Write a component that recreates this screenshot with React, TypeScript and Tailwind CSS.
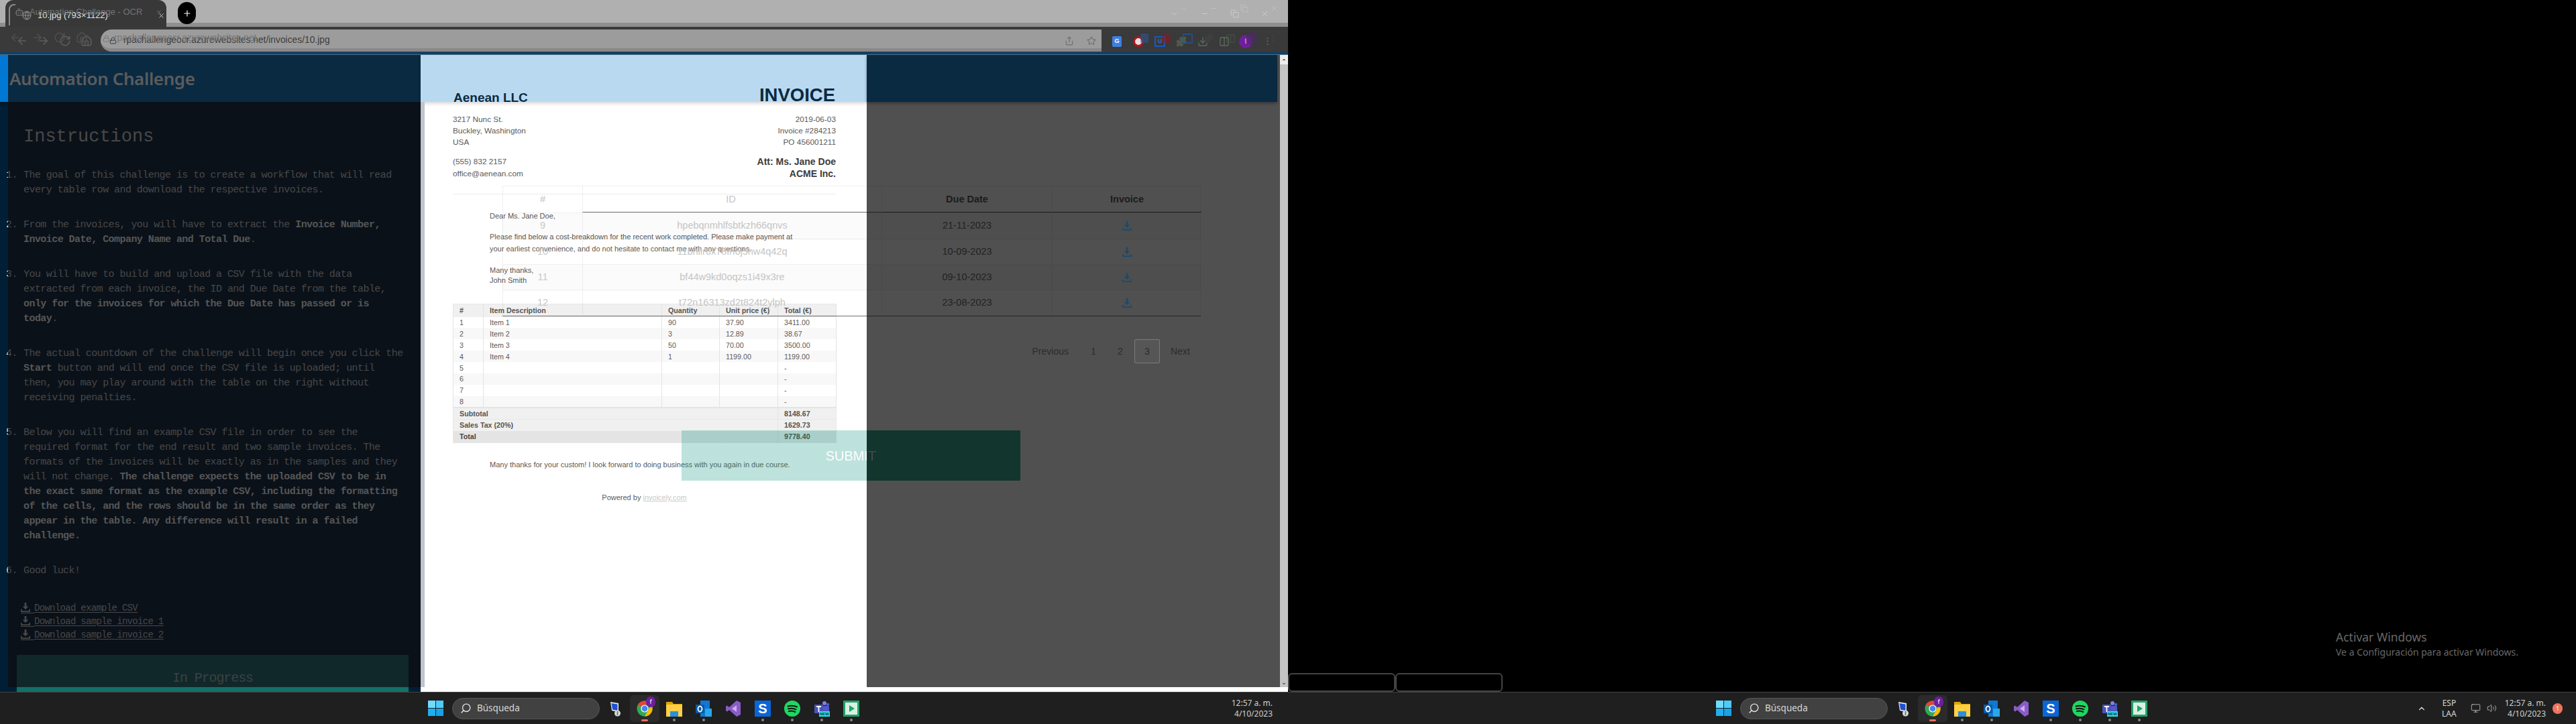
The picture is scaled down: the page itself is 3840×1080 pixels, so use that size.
import React from 'react';
import {
  ArrowLeft, ArrowRight, RotateCw, Home, Lock, Share, Star, ChevronDown, Minus, Copy, X, Plus,
  Search, ChevronUp, Monitor, Volume2, Puzzle, Download, Globe, Bot, MoreVertical, Columns2,
} from 'lucide-react';

const DownloadAlt = ({ className }: { className?: string }) => (
  <svg viewBox="0 0 15 15" className={className} fill="currentColor">
    <path d="M6 0h3v6h3.2L7.5 11 2.8 6H6z" />
    <path d="M0 10.5h1.8v2.7h11.4v-2.7H15V15H0z" />
  </svg>
);

const tableRows = [
  { n: '9', id: 'hpebqnmhlfsbtkzh66qnvs', due: '21-11-2023', h: 'h-[39px]', stripe: true },
  { n: '10', id: '11bnllr6x78fn6j5hw4q42q', due: '10-09-2023', h: 'h-[38px]', stripe: false },
  { n: '11', id: 'bf44w9kd0oqzs1i49x3re', due: '09-10-2023', h: 'h-[38px]', stripe: true },
  { n: '12', id: 't72n16313zd2t824t2ylph', due: '23-08-2023', h: 'h-[38px]', stripe: false },
];

const invoiceItems = [
  ['1', 'Item 1', '90', '37.90', '3411.00'],
  ['2', 'Item 2', '3', '12.89', '38.67'],
  ['3', 'Item 3', '50', '70.00', '3500.00'],
  ['4', 'Item 4', '1', '1199.00', '1199.00'],
  ['5', '', '', '', '-'],
  ['6', '', '', '', '-'],
  ['7', '', '', '', '-'],
  ['8', '', '', '', '-'],
];

const BrowserChrome = () => (
  <div className="relative h-[77px] shrink-0">
    <div className="flex h-[40px] bg-[#b0b0b0] border-b-[6px] border-[#8f8f8f]">
      <div className="ml-[8px] flex h-[40px] w-[240px] shrink-0 items-center rounded-t-xl bg-[#383838] pl-[25px] pt-[6px]">
        <Globe className="h-[14px] w-[14px] text-[#8a8a8a]" />
        <span className="ml-[9px] text-[13px] text-[#e4e4e4]">10.jpg (793×1122)</span>
        <X className="ml-auto mr-[2px] h-[11px] w-[11px] text-[#d0d0d0]" />
      </div>
      <div className="ml-[17px] flex h-[33px] w-[27px] mt-[3px] items-center justify-center rounded-full bg-black">
        <Plus className="h-[14px] w-[14px] text-white" />
      </div>
      <div className="ml-auto mr-[28px] flex h-[34px] items-center gap-[32px] pt-[6px] text-[#e4e4e4]">
        <ChevronDown className="h-[13px] w-[13px]" strokeWidth={1} />
        <Minus className="h-[13px] w-[13px]" strokeWidth={1} />
        <Copy className="h-[13px] w-[13px]" strokeWidth={1} />
        <X className="h-[13px] w-[13px]" strokeWidth={1} />
      </div>
    </div>

    <div className="flex h-[37px] items-end bg-[#3a3a3a]">
      <div className="flex h-[37px] w-[150px] shrink-0 items-center gap-[14px] pl-[24px] pt-[4px] text-[#5e5e5e]">
        <ArrowLeft className="h-[18px] w-[18px]" />
        <ArrowRight className="h-[18px] w-[18px]" />
        <RotateCw className="h-[18px] w-[18px]" />
        <Home className="h-[18px] w-[18px]" />
      </div>
      <div className="flex h-[33px] w-[1492px] shrink-0 items-center rounded-l-full rounded-r-2xl border-b-[5px] border-[#898989] bg-[#9c9c9c] pl-[13px] pr-[8px] pt-[5px]">
        <Lock className="h-[11px] w-[11px] text-[#333333]" />
        <span className="ml-[10px] text-[13.8px] text-[#3d3d3d]">rpachallengeocr.azurewebsites.net/invoices/10.jpg</span>
        <Share className="ml-auto h-[14px] w-[14px] text-[#707070]" />
        <Star className="ml-[19px] h-[14px] w-[14px] text-[#707070]" />
      </div>
      <div className="ml-[7px] flex h-[37px] items-center pt-[6px]">
        <div className="flex w-[32px] justify-center">
          <div className="flex h-[16px] w-[14px] items-center justify-center rounded-[2px] bg-[#3f7fe0] text-[9px] font-bold text-white">G</div>
        </div>
        <div className="flex w-[32px] justify-center">
          <div className="h-[16px] w-[16px] rounded-full border-[3px] border-[#b3131c] bg-[#e8e0e0]" />
        </div>
        <div className="flex w-[32px] justify-center">
          <div className="flex h-[16px] w-[16px] items-center justify-center border-2 border-[#1a58b8] text-[9px] font-bold text-[#2a6bd0]">U</div>
        </div>
        <div className="flex w-[32px] justify-center"><Puzzle className="h-[16px] w-[16px] text-[#4e5a4e]" fill="#4e5a4e" /></div>
        <div className="flex w-[32px] justify-center"><Download className="h-[16px] w-[16px] text-[#5c6b5c]" /></div>
        <div className="flex w-[32px] justify-center"><Columns2 className="h-[16px] w-[16px] text-[#5c6b5c]" /></div>
        <div className="flex w-[32px] justify-center">
          <div className="flex h-[20px] w-[20px] items-center justify-center rounded-full bg-[#6f1f9e] text-[11px] text-[#d8c8e8]">f</div>
        </div>
        <div className="flex w-[32px] justify-center"><MoreVertical className="h-[15px] w-[15px] text-[#5a5a5a]" /></div>
      </div>
    </div>

    {/* second exposure of the same window, shifted up and to the side */}
    <div className="absolute left-[13px] top-[6px] h-[32px] w-[10px] rounded-tl-lg border-l-2 border-t-2 border-[#8a8a8a]" />
    <div className="absolute left-[22px] top-[8px] flex w-[220px] items-center text-[#747474]">
      <Bot className="h-[14px] w-[14px]" />
      <span className="ml-[8px] text-[13px]">Automation Challenge - OCR</span>
      <X className="ml-auto h-[10px] w-[10px]" />
    </div>
    <div className="absolute left-[14px] top-[47px] flex items-center gap-[15px] text-[#4f4f4f]">
      <ArrowLeft className="h-[18px] w-[18px]" />
      <ArrowRight className="h-[18px] w-[18px]" />
      <RotateCw className="h-[18px] w-[18px]" />
      <Home className="h-[18px] w-[18px]" />
    </div>
    <div className="absolute left-[153px] top-[47px] flex items-center text-[#767676]">
      <Lock className="h-[11px] w-[11px]" />
      <span className="ml-[6px] text-[13.8px]">rpachallengeocr.azurewebsites.net</span>
    </div>
    <div className="absolute right-[14px] top-[6px] flex items-center gap-[32px] text-[#cfcfcf]">
      <ChevronDown className="h-[13px] w-[13px]" strokeWidth={1} />
      <Minus className="h-[13px] w-[13px]" strokeWidth={1} />
      <Copy className="h-[13px] w-[13px]" strokeWidth={1} />
      <X className="h-[13px] w-[13px]" strokeWidth={1} />
    </div>
    <div className="absolute left-[1690px] top-[47px] flex items-center opacity-60">
      <div className="flex w-[32px] justify-center"><div className="h-[14px] w-[12px] rounded-[2px] bg-[#2c5694]" /></div>
      <div className="flex w-[32px] justify-center"><div className="h-[15px] w-[13px] rounded-full bg-[#8d1a22]" /></div>
      <div className="flex w-[32px] justify-center"><div className="h-[15px] w-[15px] border-2 border-[#1a58b8]" /></div>
      <div className="flex w-[32px] justify-center"><Puzzle className="h-[14px] w-[14px] text-[#444444]" fill="#444444" /></div>
      <div className="flex w-[32px] justify-center"><Columns2 className="h-[15px] w-[15px] text-[#4e5a4e]" /></div>
      <div className="flex w-[32px] justify-center"><div className="h-[20px] w-[18px] rounded-full bg-[#4d2a66]" /></div>
      <div className="flex w-[32px] justify-center"><MoreVertical className="h-[14px] w-[14px] text-[#4a4a4a]" /></div>
    </div>
  </div>
);

const InstructionItem = ({ n, last, children }: { n: number; last?: boolean; children: React.ReactNode }) => (
  <li className={`flex ${last ? '' : 'mb-[30px]'}`}>
    <span className="w-[26px] shrink-0 bg-[linear-gradient(90deg,#e8e8e8_3px,#484848_3px)] bg-clip-text text-transparent">{n}.</span>
    <div className="w-[571px]">{children}</div>
  </li>
);

const B = ({ children }: { children: React.ReactNode }) => <strong className="font-bold text-[#565656]">{children}</strong>;

const LeftColumn = () => (
  <div className="flex w-[627px] shrink-0 flex-col bg-[#001e35] font-['Liberation_Mono',monospace]">
    <div className="flex h-[70px] shrink-0 shadow-[0_2px_4px_rgba(0,0,0,0.4)]">
      <div className="w-[12px] bg-[#0078d4]" />
      <div className="flex flex-1 items-center bg-[#0a2a42] pl-[2px]">
        <h1 className="font-['Noto_Sans',sans-serif] text-[26px] font-semibold tracking-[-0.4px] text-[#5c5c5c]">Automation Challenge</h1>
      </div>
    </div>
    <div className="ml-[12px] flex h-[873px] flex-col bg-[#0b1119] pt-[33px] text-[15px] leading-[22px] tracking-[-0.56px] text-[#484848]">
      <h2 className="ml-[23px] mb-[28px] text-[27px] leading-[38px] tracking-normal text-[#484848]">Instructions</h2>
      <ol className="ml-[-3px]">
        <InstructionItem n={1}>The goal of this challenge is to create a workflow that will read every table row and download the respective invoices.</InstructionItem>
        <InstructionItem n={2}>From the invoices, you will have to extract the <B>Invoice Number, Invoice Date, Company Name and Total Due</B>.</InstructionItem>
        <InstructionItem n={3}>You will have to build and upload a CSV file with the data extracted from each invoice, the ID and Due Date from the table, <B>only for the invoices for which the Due Date has passed or is today</B>.</InstructionItem>
        <InstructionItem n={4}>The actual countdown of the challenge will begin once you click the <B>Start</B> button and will end once the CSV file is uploaded; until then, you may play around with the table on the right without receiving penalties.</InstructionItem>
        <InstructionItem n={5}>Below you will find an example CSV file in order to see the required format for the end result and two sample invoices. The formats of the invoices will be exactly as in the samples and they will not change. <B>The challenge expects the uploaded CSV to be in the exact same format as the example CSV, including the formatting of the cells, and the rows should be in the same order as they appear in the table. Any difference will result in a failed challenge.</B></InstructionItem>
        <InstructionItem n={6} last>Good luck!</InstructionItem>
      </ol>
      <div className="ml-[19px] mt-[34px] flex flex-col text-[14px] leading-[20px] tracking-[-0.7px] text-[#484848]">
        {['Download example CSV', 'Download sample invoice 1', 'Download sample invoice 2'].map((label) => (
          <a key={label} className="flex h-[20px] w-fit items-center underline underline-offset-2">
            <span className="w-[20px] border-b border-[#484848] pb-[1px]"><DownloadAlt className="h-[14px] w-[14px]" /></span>
            {label}
          </a>
        ))}
      </div>
      <div className="relative ml-[13px] mt-[20px] mb-[-7px] flex h-[55px] w-[584px] shrink-0 flex-col">
        <div className="flex h-[48px] items-end justify-center bg-[#11282a] pb-[1px] text-[20px] leading-[24px] tracking-[-1.1px] text-[#3a4242]">In Progress</div>
        <div className="h-[7px] bg-[#137167]" />
      </div>
    </div>
  </div>
);

const InvoiceColumn = () => (
  <div className="flex w-[665px] shrink-0 flex-col bg-white font-['Liberation_Sans',sans-serif] text-[11.8px] text-[#5a5a5a]">
    <div className="flex h-[70px] shrink-0 items-end justify-between bg-[#b9d9f0] pl-[49px] pr-[47px] shadow-[0_2px_6px_rgba(0,0,0,0.18)]">
      <div className="mb-[-4px] text-[19px] font-bold leading-[20px] text-[#0a2a42]">Aenean LLC</div>
      <div className="mb-[-4px] text-[27.5px] font-bold leading-[28px] text-[#0a2a42]">INVOICE</div>
    </div>
    <div className="flex h-[873px] flex-col border-l-[6px] border-[#c0c4cc] pl-[42px] pr-[46px] pt-[18px]">
      <div className="flex justify-between">
        <div>
          <div className="leading-[17px]">3217 Nunc St.</div>
          <div className="leading-[17px]">Buckley, Washington</div>
          <div className="leading-[17px]">USA</div>
          <div className="mt-[11px] leading-[18px]">(555) 832 2157</div>
          <div className="leading-[18px]">office@aenean.com</div>
        </div>
        <div className="text-right">
          <div className="leading-[17px]">2019-06-03</div>
          <div className="leading-[17px]">Invoice #284213</div>
          <div className="leading-[17px]">PO 456001211</div>
          <div className="mt-[11px] text-[14px] font-bold leading-[18px] text-[#3c3c3c]">Att: Ms. Jane Doe</div>
          <div className="text-[14px] font-bold leading-[18px] text-[#3c3c3c]">ACME Inc.</div>
        </div>
      </div>
      <div className="mt-[21px] h-px bg-[#ececec]" />
      <div className="ml-[55px] mt-[24px] text-[11px]">
        <p className="leading-[16px]">Dear Ms. Jane Doe,</p>
        <p className="mt-[14px] leading-[18px]">Please find below a cost-breakdown for the recent work completed. Please make payment at<br />your earliest convenience, and do not hesitate to contact me with any questions.</p>
        <p className="mt-[16px] leading-[15px]">Many thanks,<br />John Smith</p>
      </div>
      <table className="mt-[27px] w-[571px] table-fixed border-collapse border border-[#e8e8e8] text-[10.7px] leading-[16px]">
        <colgroup>
          <col className="w-[45px]" />
          <col className="w-[266px]" />
          <col className="w-[86px]" />
          <col className="w-[87px]" />
          <col className="w-[87px]" />
        </colgroup>
        <thead>
          <tr className="h-[19px] bg-[#f0f0f0] text-left font-bold text-[#555555]">
            {['#', 'Item Description', 'Quantity', 'Unit price (€)', 'Total (€)'].map((h) => (
              <th key={h} className="border-x border-[#e4e4e4] px-[9px] py-0 font-bold">{h}</th>
            ))}
          </tr>
        </thead>
        <tbody>
          {invoiceItems.map((row, i) => (
            <tr key={row[0]} className={`h-[16.9px] ${i % 2 === 1 ? 'bg-[#f8f8f8]' : 'bg-white'}`}>
              {row.map((cell, c) => (
                <td key={c} className="border-x border-[#e4e4e4] px-[9px] py-0">{cell}</td>
              ))}
            </tr>
          ))}
          <tr className="h-[18px] border-t-2 border-[#e4e4e4] bg-[#f0f0f0] font-bold text-[#555555]">
            <td colSpan={4} className="px-[9px] py-0">Subtotal</td>
            <td className="border-l border-[#e4e4e4] px-[9px] py-0">8148.67</td>
          </tr>
          <tr className="h-[17px] border-t border-[#e8e8e8] bg-[#f0f0f0] font-bold text-[#555555]">
            <td colSpan={4} className="px-[9px] py-0">Sales Tax (20%)</td>
            <td className="border-l border-[#e4e4e4] px-[9px] py-0">1629.73</td>
          </tr>
          <tr className="h-[18px] bg-[#e4e4e4] font-bold text-[#444444]">
            <td colSpan={4} className="px-[9px] py-0">Total</td>
            <td className="border-l border-[#d8d8d8] px-[9px] py-0">9778.40</td>
          </tr>
        </tbody>
      </table>
      <p className="ml-[55px] mt-[24px] text-[11px] leading-[16px]">Many thanks for your custom! I look forward to doing business with you again in due course.</p>
      <p className="mt-[33px] text-center text-[11px] leading-[16px]">Powered by <span className="text-[#c8c8c8] underline">invoicely.com</span></p>
    </div>
  </div>
);

const RightColumn = () => (
  <div className="flex min-w-0 flex-1 flex-col bg-white">
    <div className="flex h-[943px] shrink-0">
      <div className="flex flex-1 flex-col bg-[#505050]">
        <div className="mr-[4px] h-[70px] bg-[#0a2a42] shadow-[0_2px_4px_rgba(0,0,0,0.35)]" />
      </div>
      <div className="flex w-[12px] flex-col justify-between bg-[#c4c4c4] text-[#555555]">
        <div className="flex h-[14px] items-center justify-center bg-[#eeeeee]"><ChevronUp className="h-[8px] w-[8px]" fill="currentColor" /></div>
        <div className="flex h-[10px] items-center justify-center"><ChevronDown className="h-[8px] w-[8px]" fill="currentColor" /></div>
      </div>
    </div>
  </div>
);

// the challenge table and the submit button sit over both the invoice and the dimmed page
const ChallengeTable = () => (
  <div className="absolute left-[749px] top-[200px] flex w-[1041px] flex-col font-['Liberation_Sans',sans-serif] text-[14.5px]">
    <div className="grid h-[41px] grid-cols-[118px_446px_254px_223px] items-center border border-black/[0.06]">
      <div className="flex h-full items-center justify-center pt-[1px] text-[#c4c4c4]">#</div>
      <div className="flex h-full items-center justify-center border-b border-l border-l-black/[0.06] border-b-black/55 pr-[4px] pt-[1px] text-[#c4c4c4]">ID</div>
      <div className="flex h-full items-center justify-center border-b border-l border-l-black/[0.06] border-b-black/65 pt-[1px] font-bold text-[#1c1c1c]">Due Date</div>
      <div className="flex h-full items-center justify-center border-b border-l border-l-black/[0.06] border-b-black/65 pt-[1px] font-bold text-[#1c1c1c]">Invoice</div>
    </div>
    {tableRows.map((row) => (
      <div
        key={row.n}
        className={`grid ${row.h} grid-cols-[118px_446px_254px_223px] items-center border-x border-b border-black/[0.06] ${row.stripe ? 'bg-black/[0.015]' : ''}`}
      >
        <div className="text-center text-[#c8c8c8]">{row.n}</div>
        <div className="flex h-full items-center justify-center border-l border-black/[0.06] text-[#c4c4c4]">{row.id}</div>
        <div className="flex h-full items-center justify-center border-l border-black/[0.06] text-[#222222]">{row.due}</div>
        <div className="flex h-full items-center justify-center border-l border-black/[0.06] text-[#1c4a6c]"><DownloadAlt className="h-[14px] w-[14px]" /></div>
      </div>
    ))}
    <div className="h-px bg-black/50" />
    <div className="mt-[34px] flex h-[36px] items-center justify-end text-[14px] text-[#2c2c2c]">
      <span className="w-[80px] pr-[17px] text-right">Previous</span>
      <span className="w-[40px] text-center">1</span>
      <span className="w-[40px] text-center">2</span>
      <span className="ml-[1px] flex h-[36px] w-[38px] items-center justify-center rounded-[2px] border border-[#7a7a7a] bg-[#565656]">3</span>
      <span className="w-[61px] text-center">Next</span>
    </div>
  </div>
);

const SubmitOverlay = () => (
  <div className="absolute left-[1016px] top-[565px] flex h-[75px] w-[505px] items-center justify-center bg-[linear-gradient(90deg,rgba(20,150,130,0.28)_276px,#12352d_276px)] font-['Liberation_Sans',sans-serif]">
    <span className="bg-[linear-gradient(90deg,#ffffff_61px,#4a4a4a_61px)] bg-clip-text text-[20px] text-transparent">SUBMIT</span>
  </div>
);

const ChromeIcon = () => (
  <div className="relative h-[24px] w-[24px]">
    <svg viewBox="0 0 24 24" className="h-[24px] w-[24px]">
      <circle cx="12" cy="12" r="11.5" fill="#34a853" />
      <path d="M12 23.5 22 6.2A11.5 11.5 0 0 1 12 23.5z" fill="#fbbc04" />
      <path d="M2 6.2A11.5 11.5 0 0 1 22 6.2H12a6 6 0 0 0-5.2 3z" fill="#ea4335" />
      <circle cx="12" cy="12" r="5.6" fill="#ffffff" />
      <circle cx="12" cy="12" r="4.4" fill="#4285f4" />
    </svg>
    <span className="absolute right-[-4px] top-[-6px] flex h-[16px] w-[14px] items-center justify-center rounded-full bg-[#6f1f9e] text-[9px] text-white">f</span>
  </div>
);

const dockIcons = [
  {
    key: 'computer',
    dot: false,
    node: (
      <svg viewBox="0 0 24 24" className="h-[24px] w-[24px]">
        <path d="M5 2 17 4v13L7 15z" fill="#e8e8f0" />
        <path d="M6.5 4 15.5 5.5v9.500L8 13.500z" fill="#2050d0" />
        <circle cx="15.500" cy="19" r="4.500" fill="#d8d8d8" />
        <path d="M15.500 16v6" stroke="#3a8a3a" strokeWidth="1.500" />
      </svg>
    ),
  },
  { key: 'chrome', dot: false, active: true, node: <ChromeIcon /> },
  {
    key: 'folder',
    dot: true,
    node: (
      <svg viewBox="0 0 24 24" className="h-[24px] w-[24px]">
        <path d="M0 2h9l2 3h13v19H0z" fill="#e0a400" />
        <rect y="6" width="24" height="18" fill="#ffcf48" />
        <rect x="6" y="16" width="12" height="8" fill="#2b8fd8" />
      </svg>
    ),
  },
  {
    key: 'outlook',
    dot: true,
    node: (
      <svg viewBox="0 0 24 24" className="h-[24px] w-[24px]">
        <rect x="7" y="0" width="14" height="24" fill="#0f78d4" />
        <rect x="14" y="12" width="10" height="12" fill="#28a8ea" />
        <rect x="0" y="6" width="13" height="13" rx="1" fill="#0a5aa8" />
        <ellipse cx="6.500" cy="12.500" rx="3" ry="4" fill="none" stroke="#fff" strokeWidth="1.800" />
      </svg>
    ),
  },
  {
    key: 'vs',
    dot: false,
    node: (
      <svg viewBox="0 0 24 24" className="h-[24px] w-[24px]">
        <path d="M17 0l6 3v18l-6 3L6 14l-3 2.500L1 15V9l2-1.500L6 10z" fill="#8a5cc8" />
        <path d="M17 7 10 12l7 5z" fill="#c8b0ea" />
      </svg>
    ),
  },
  {
    key: 's',
    dot: true,
    node: (
      <div className="flex h-[24px] w-[24px] items-center justify-center bg-[#0a66d8] font-['Liberation_Sans',sans-serif] text-[20px] font-bold leading-none text-white">S</div>
    ),
  },
  {
    key: 'spotify',
    dot: true,
    node: (
      <svg viewBox="0 0 24 24" className="h-[24px] w-[24px]">
        <circle cx="12" cy="12" r="12" fill="#1ed760" />
        <path d="M5.500 8.500c4.500-1.300 9.500-1 13.500 1M6 12.300c4-1 8-.8 11.500 1M6.800 16c3.500-.8 6.500-.5 9.500 1" stroke="#111" strokeWidth="2" strokeLinecap="round" fill="none" />
      </svg>
    ),
  },
  {
    key: 'teams',
    dot: true,
    node: (
      <div className="relative h-[24px] w-[24px]">
        <svg viewBox="0 0 24 24" className="h-[24px] w-[24px]">
          <circle cx="16" cy="4" r="3" fill="#7b83eb" />
          <circle cx="21" cy="6" r="2.300" fill="#5059c9" />
          <rect x="11" y="8" width="12" height="11" rx="2" fill="#5059c9" />
          <rect x="1" y="6" width="13" height="13" rx="1" fill="#4b53bc" />
          <path d="M4 9h7M7.500 9v8" stroke="#fff" strokeWidth="1.800" />
        </svg>
        <span className="absolute bottom-0 right-0 bg-[#2fe0e0] px-[1px] font-['Liberation_Sans',sans-serif] text-[6px] font-bold leading-[8px] text-[#0a3a50]">NEW</span>
      </div>
    ),
  },
  {
    key: 'green',
    dot: true,
    node: (
      <svg viewBox="0 0 24 24" className="h-[24px] w-[24px]">
        <rect width="24" height="24" fill="#21a366" />
        <rect x="3" y="3" width="18" height="18" fill="#d8f0e4" />
        <path d="M9 7l8 5-8 5z" fill="#21a366" />
      </svg>
    ),
  },
];

const Dock = () => (
  <>
    <div className="grid h-[23px] w-[23px] shrink-0 grid-cols-2 gap-[1px]">
      <div className="bg-[#6ddcff]" />
      <div className="bg-[#4fcbfa]" />
      <div className="bg-[#1eb0f0]" />
      <div className="bg-[#1aa2e8]" />
    </div>
    <div className="ml-[13px] flex h-[32px] w-[220px] shrink-0 items-center rounded-full border border-[#555555] bg-[#414141] pl-[11px] text-[13.5px] text-[#d8d8d8]">
      <Search className="h-[17px] w-[17px] -scale-x-100 text-[#e0e0e0]" />
      <span className="ml-[8px]">Búsqueda</span>
    </div>
    <div className="ml-[1px] flex shrink-0">
      {dockIcons.map((icon) => (
        <div key={icon.key} className={`relative flex h-[40px] w-[44px] items-center justify-center rounded-md ${icon.active ? 'bg-[#2b2b2b]' : ''}`}>
          {icon.node}
          {icon.dot && <span className="absolute bottom-[1px] h-[4px] w-[4px] rounded-full bg-[#8a8a8a]" />}
          {icon.active && <span className="absolute bottom-[1px] h-[3px] w-[10px] rounded-full bg-[#e87060]" />}
        </div>
      ))}
    </div>
  </>
);

const Clock = () => (
  <div className="text-right text-[12px] leading-[16px] text-[#cfcfcf]">
    <div>12:57 a. m.</div>
    <div>4/10/2023</div>
  </div>
);

const Taskbar = () => (
  <div className="flex h-[48px] shrink-0 border-t border-[#444444] bg-[#1f1f1f] font-['Noto_Sans',sans-serif]">
    <div className="flex w-[1920px] shrink-0 items-center pl-[638px] pr-[23px]">
      <Dock />
      <div className="ml-auto"><Clock /></div>
    </div>
    <div className="flex w-[1920px] shrink-0 items-center pl-[638px]">
      <Dock />
      <div className="ml-auto flex items-center text-[#d8d8d8]">
        <ChevronUp className="h-[14px] w-[14px]" />
        <div className="ml-[23px] text-center text-[12px] leading-[16px]">ESP<br />LAA</div>
        <Monitor className="ml-[21px] h-[15px] w-[15px]" strokeWidth={1.2} />
        <Volume2 className="ml-[9px] h-[15px] w-[15px]" strokeWidth={1.2} />
        <div className="ml-[12px]"><Clock /></div>
        <div className="ml-[10px] mr-[20px] flex h-[16px] w-[15px] items-center justify-center rounded-full bg-[#f0735f] text-[9px] text-white">1</div>
      </div>
    </div>
  </div>
);

const App: React.FC = () => {
  return (
    <div className="flex h-[1080px] w-[3840px] flex-col overflow-hidden bg-black font-['Liberation_Sans',sans-serif]">
      <div className="flex min-h-0 flex-1">
        <div className="flex w-[1920px] shrink-0 flex-col">
          <BrowserChrome />
          <div className="relative flex min-h-0 flex-1 flex-col">
            <div className="flex h-[5px] shrink-0 flex-col bg-[#17405f]">
              <div className="mt-[4px] h-px bg-[#4f7590]" />
            </div>
            <div className="flex min-h-0 flex-1">
              <LeftColumn />
              <InvoiceColumn />
              <RightColumn />
            </div>
            <ChallengeTable />
            <SubmitOverlay />
          </div>
        </div>
        <div className="relative flex-1 font-['Noto_Sans',sans-serif]">
          <div className="flex pt-[1004px]">
            <div className="h-[28px] w-[160px] rounded-md border-2 border-[#444444]" />
            <div className="h-[28px] w-[160px] rounded-md border-2 border-[#444444]" />
          </div>
          <div className="absolute left-[1562px] top-[938px] text-[#686868]">
            <div className="text-[17.5px] leading-[24px]">Activar Windows</div>
            <div className="text-[14px] leading-[22px]">Ve a Configuración para activar Windows.</div>
          </div>
        </div>
      </div>
      <Taskbar />
    </div>
  );
};

export default App;
